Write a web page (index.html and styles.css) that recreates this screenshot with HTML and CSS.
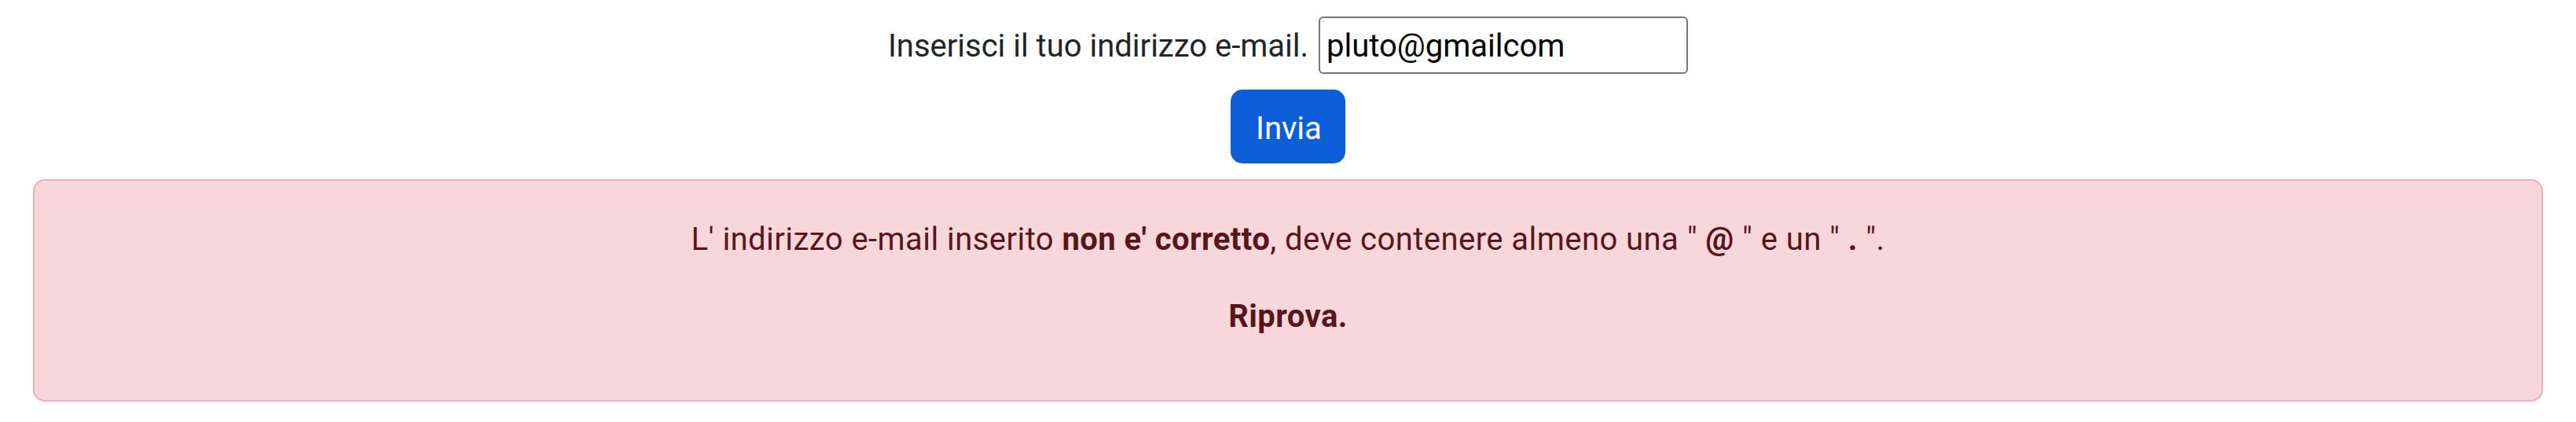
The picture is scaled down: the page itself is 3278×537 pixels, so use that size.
FILE: index.html
```html
<!DOCTYPE html>
<html lang="it">
<head>
<meta charset="utf-8">
<title>Verifica e-mail</title>
<link rel="stylesheet" href="styles.css">
</head>
<body>
<main class="page">
  <form class="email-form">
    <div class="field-row">
      <label class="field-label" for="email">Inserisci il tuo indirizzo e-mail.</label>
      <input class="field-input" id="email" type="text" value="pluto@gmailcom">
    </div>
    <button class="btn-send" type="button">Invia</button>
  </form>
  <div class="alert-error">
    <p class="alert-line">L' indirizzo e-mail inserito <strong>non e' corretto</strong>, deve contenere almeno una " <strong>@</strong> " e un " <strong>.</strong> ".</p>
    <p class="alert-line"><strong>Riprova.</strong></p>
  </div>
</main>
</body>
</html>
```
FILE: styles.css
```css
* { box-sizing: border-box; }

html, body {
  margin: 0;
  padding: 0;
  background: #ffffff;
}

body {
  font-family: Roboto, "Liberation Sans", sans-serif;
  font-size: 40px;
  line-height: 60px;
  color: #212529;
}

.page {
  display: flex;
  flex-direction: column;
  padding: 21px 42px 0;
  gap: 20px;
}

.email-form {
  display: flex;
  flex-direction: column;
  align-items: center;
  gap: 20px;
  margin: 0;
}

.field-row {
  display: flex;
  align-items: baseline;
  gap: 13px;
}

.field-label {
  white-space: nowrap;
}

.field-input {
  width: 470px;
  height: 73px;
  padding: 2px 8px 0;
  border: 2px solid #767676;
  border-radius: 6px;
  font-family: inherit;
  font-size: 40px;
  line-height: normal;
  color: #000000;
  background: #ffffff;
  outline: none;
}

.btn-send {
  width: 146px;
  height: 94px;
  padding: 18px 30px 12px;
  border: 2px solid #0b5ed7;
  border-radius: 15px;
  background: #0b5ed7;
  color: #ffffff;
  font-family: inherit;
  font-size: 40px;
  line-height: 60px;
  cursor: pointer;
}

.alert-error {
  padding: 45px 40px 35px;
  border: 2px solid #f1aeb5;
  border-radius: 15px;
  background: #f8d7da;
  color: #58151c;
  text-align: center;
  height: 283px;
}

.alert-line {
  margin: 0 0 38px;
  letter-spacing: 0.45px;
}

.alert-line strong {
  font-weight: 700;
}
```
